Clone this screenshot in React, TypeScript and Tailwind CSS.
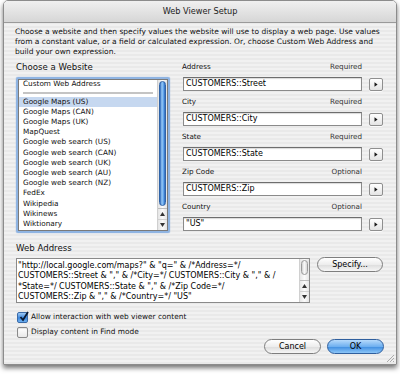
import React from "react";

const Arrow = () => (
  <div className="w-[14px] h-[13px] border border-[#8f8f8f] rounded-[2px] bg-[linear-gradient(#ffffff,#e4e4e4)] flex items-center justify-center shadow-[0_1px_0_rgba(255,255,255,0.8)]">
    <svg width="4" height="5" viewBox="0 0 4 5">
      <path d="M0.5 0.3L3.6 2.5L0.5 4.7Z" fill="#1a1a1a" />
    </svg>
  </div>
);

function Field({ label, req, value }: { label: string; req: string; value: string }) {
  return (
    <div className="flex flex-col">
      <div className="h-[10px] flex items-center justify-between pr-[21px] text-[7.2px] text-[#111]">
        <span>{label}</span>
        <span className="text-[#333]">{req}</span>
      </div>
      <div className="mt-[5px] h-[14px] flex items-center">
        <div className="ml-[1px] w-[180px] h-[14px] bg-white border border-[#8a8a8a] border-t-[#6e6e6e] shadow-[inset_0_1px_1px_rgba(0,0,0,0.15)] flex items-center pl-[2px] text-[8px] text-black">
          {value}
        </div>
        <div className="ml-[7px]">
          <Arrow />
        </div>
      </div>
    </div>
  );
}

const items = [
  "Google Maps (US)",
  "Google Maps (CAN)",
  "Google Maps (UK)",
  "MapQuest",
  "Google web search (US)",
  "Google web search (CAN)",
  "Google web search (UK)",
  "Google web search (AU)",
  "Google web search (NZ)",
  "FedEx",
  "Wikipedia",
  "Wikinews",
  "Wiktionary",
];

const SmallArrows = () => (
  <div className="flex flex-col items-center">
    <div className="h-[11px] w-full flex items-center justify-center border-t border-[#bdbdbd]">
      <svg width="5" height="4" viewBox="0 0 5 4"><path d="M2.5 0L5 4H0Z" fill="#333" /></svg>
    </div>
    <div className="h-[11px] w-full flex items-center justify-center border-t border-[#d0d0d0]">
      <svg width="5" height="4" viewBox="0 0 5 4"><path d="M0 0H5L2.5 4Z" fill="#333" /></svg>
    </div>
  </div>
);

const Checkbox = ({ checked }: { checked?: boolean }) =>
  checked ? (
    <div className="relative w-[11px] h-[11px] rounded-[2px] border border-[#3a6aa8] bg-[linear-gradient(#9fcaf6,#3b86dc_55%,#6fb2f2)]">
      <svg className="absolute left-[1px] top-[-2px]" width="10" height="11" viewBox="0 0 10 11">
        <path d="M1.5 6L4 9L9 1" stroke="#0b1a33" strokeWidth="1.8" fill="none" />
      </svg>
    </div>
  ) : (
    <div className="w-[11px] h-[11px] rounded-[2px] border border-[#8a8a8a] bg-[linear-gradient(#ffffff,#e8e8e8)] shadow-[inset_0_1px_1px_rgba(0,0,0,0.1)]" />
  );

export default function App() {
  return (
    <div className="w-[400px] h-[374px] bg-white overflow-hidden font-['DejaVu_Sans',sans-serif] text-black">
      <div className="ml-[3px] w-[394px] h-[365px] rounded-t-[5px] border border-[#8c8c8c] shadow-[0_3px_5px_rgba(0,0,0,0.55)] flex flex-col overflow-hidden">
        <div className="h-[22px] shrink-0 bg-[linear-gradient(#f0f0f0,#d6d6d6)] border-b border-[#9a9a9a] flex items-center justify-center text-[8.2px] text-[#222]">
          Web Viewer Setup
        </div>
        <div className="relative flex-1 flex flex-col bg-[#ececec] bg-[image:repeating-linear-gradient(0deg,#e9e9e9_0px,#e9e9e9_2px,#f1f1f1_2px,#f1f1f1_4px)] px-[11px]">
          <div className="mt-[4px] text-[7.5px] leading-[10px] text-[#111] whitespace-nowrap">
            Choose a website and then specify values the website will use to display a web page. Use values
            <br />
            from a constant value, or a field or calculated expression. Or, choose Custom Web Address and
            <br />
            build your own expression.
          </div>

          <div className="mt-[5px] flex">
            {/* left column */}
            <div className="ml-[1px] w-[154px] flex flex-col">
              <div className="h-[10px] flex items-center text-[8.6px] text-[#111]">Choose a Website</div>
              <div className="mt-[5px] h-[156px] rounded-[2px] border-2 border-[#8fb4e2] shadow-[0_0_1px_#5b8fd0]">
                <div className="h-full flex bg-white border border-[#7a7a7a] overflow-hidden">
                  <div className="flex-1 flex flex-col text-[7.3px] text-[#111]">
                    <div className="h-[9px] shrink-0 flex items-center pl-[4px]">Custom Web Address</div>
                    <div className="h-[8px] shrink-0 flex items-center px-[4px]">
                      <div className="w-full h-[2px] bg-[#c4c4c4]" />
                    </div>
                    {items.map((t, i) => (
                      <div
                        key={t}
                        className={
                          i === 0
                            ? "h-[10.2px] shrink-0 flex items-center pl-[4px] bg-[#c6d8f0]"
                            : "h-[10.2px] shrink-0 flex items-center pl-[4px]"
                        }
                      >
                        {t}
                      </div>
                    ))}
                  </div>
                  <div className="w-[10px] shrink-0 flex flex-col border-l border-[#cfcfcf] bg-[image:linear-gradient(90deg,#e4e4e4,#fafafa_50%,#e4e4e4)]">
                    <div className="flex-1 px-[1px] pt-[1px] pb-[2px]">
                      <div className="h-[125px] rounded-[4px] border border-[#2f63a8] bg-[image:linear-gradient(90deg,#2a66ba,#9acbf7_40%,#62a4ea_70%,#2a66ba)]" />
                    </div>
                    <SmallArrows />
                  </div>
                </div>
              </div>
            </div>

            {/* right column */}
            <div className="ml-[12px] w-[201px] flex flex-col gap-[6px]">
              <Field label="Address" req="Required" value="CUSTOMERS::Street" />
              <Field label="City" req="Required" value="CUSTOMERS::City" />
              <Field label="State" req="Required" value="CUSTOMERS::State" />
              <Field label="Zip Code" req="Optional" value="CUSTOMERS::Zip" />
              <Field label="Country" req="Optional" value={'"US"'} />
            </div>
          </div>

          <div className="mt-[10px] ml-[1px] h-[10px] flex items-center text-[8.6px] text-[#111]">Web Address</div>
          <div className="mt-[5px] flex items-start">
            <div className="ml-[1px] w-[294px] h-[45px] bg-white border border-[#8a8a8a] flex overflow-hidden">
              <div className="flex-1 pl-[1px] pt-[1.5px] text-[8px] leading-[10.5px] text-black whitespace-nowrap">
                "http://local.google.com/maps?" &amp; "q=" &amp; /*Address=*/
                <br />
                CUSTOMERS::Street &amp; "," &amp; /*City=*/ CUSTOMERS::City &amp; "," &amp; /
                <br />
                *State=*/ CUSTOMERS::State &amp; "," &amp; /*Zip Code=*/
                <br />
                CUSTOMERS::Zip &amp; "," &amp; /*Country=*/ "US"
              </div>
              <div className="w-[10px] shrink-0 flex flex-col border-l border-[#d0d0d0] bg-[image:linear-gradient(90deg,#e6e6e6,#fbfbfb_50%,#e6e6e6)]">
                <div className="flex-1 px-[1px] pt-[1px]">
                  <div className="h-[15px] rounded-[4px] border border-[#9a9a9a] bg-[image:linear-gradient(90deg,#cfcfcf,#fafafa_45%,#d8d8d8)]" />
                </div>
                <SmallArrows />
              </div>
            </div>
            <div className="ml-[7px] -mt-[1px] w-[66px] h-[15px] rounded-full border border-[#7e7e7e] bg-[linear-gradient(#ffffff,#ededed_50%,#dcdcdc_51%,#f6f6f6)] flex items-center justify-center text-[8px] text-black">
              Specify...
            </div>
          </div>

          <div className="mt-[8px] ml-[2px] h-[12px] flex items-center gap-[3px] text-[7.4px] text-[#111]">
            <Checkbox checked />
            <span>Allow interaction with web viewer content</span>
          </div>
          <div className="mt-[3px] ml-[2px] h-[12px] flex items-center gap-[3px] text-[7.4px] text-[#111]">
            <Checkbox />
            <span>Display content in Find mode</span>
          </div>

          <div className="mt-[1px] flex justify-end gap-[6px] pr-[1px]">
            <div className="w-[57px] h-[15px] rounded-full border border-[#7e7e7e] bg-[linear-gradient(#ffffff,#ededed_50%,#dcdcdc_51%,#f6f6f6)] flex items-center justify-center text-[8px] text-black">
              Cancel
            </div>
            <div className="w-[57px] h-[15px] rounded-full border border-[#2f5f9e] bg-[linear-gradient(#b6dafb,#6fb0f0_50%,#3d8ce0_51%,#8cc6f8)] flex items-center justify-center text-[8px] text-black">
              OK
            </div>
          </div>

          <svg className="absolute right-[1px] bottom-[1px]" width="10" height="10" viewBox="0 0 10 10">
            <path d="M9 2L2 9M9 5L5 9M9 8L8 9" stroke="#9a9a9a" strokeWidth="0.8" />
          </svg>
        </div>
      </div>
    </div>
  );
}
